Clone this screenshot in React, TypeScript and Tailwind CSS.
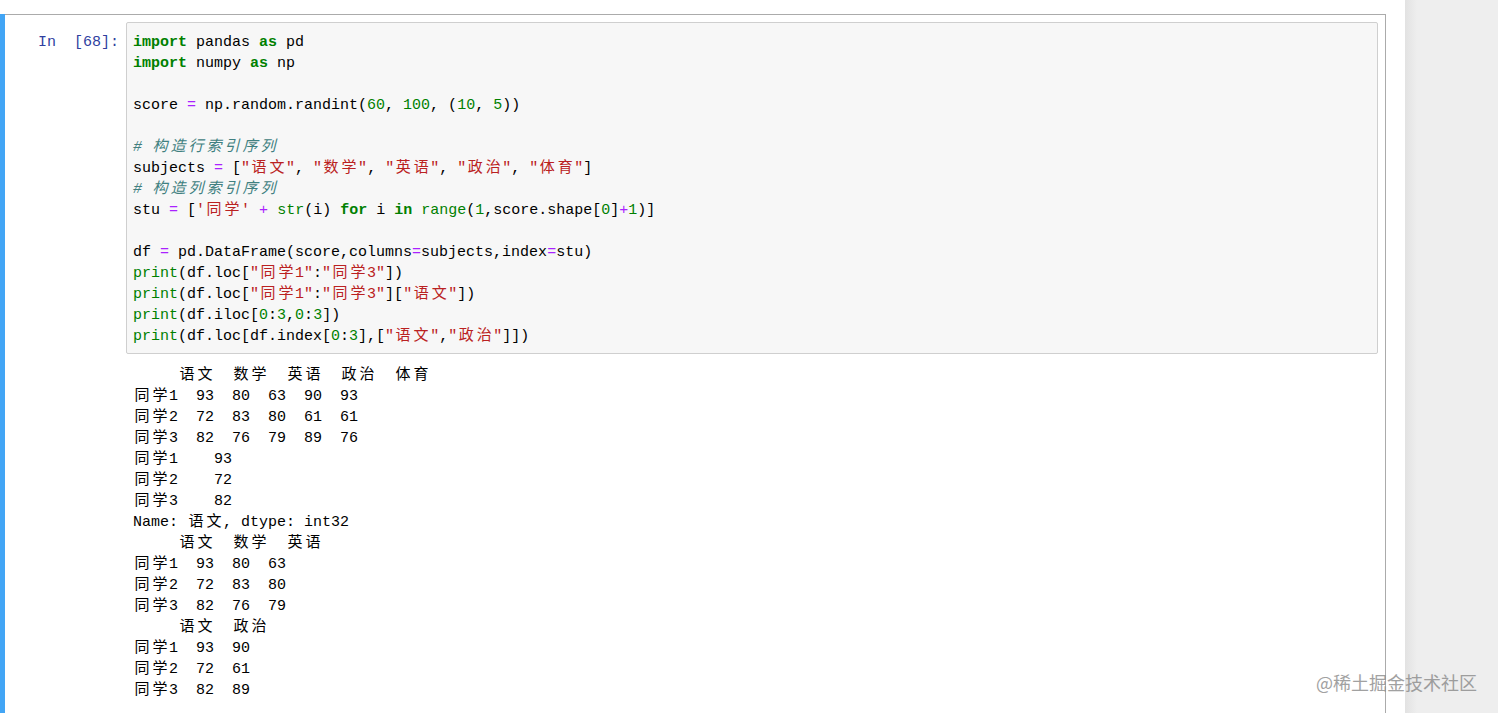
import React from "react";

const CJK = /[\u2E80-\u9FFF\uFF00-\uFFEF\u3000-\u303F]/;

// split text so every CJK char takes two mono cells, like the notebook font
function fmt(text: string) {
  const out: React.ReactNode[] = [];
  let buf = "";
  [...text].forEach((ch, i) => {
    if (CJK.test(ch)) {
      if (buf) out.push(buf);
      buf = "";
      out.push(
        <span key={i} className="inline-block w-[18px] text-center">
          {ch}
        </span>
      );
    } else {
      buf += ch;
    }
  });
  if (buf) out.push(buf);
  return out;
}

const K = ({ t }: { t: string }) => <span className="font-bold text-[#008000]">{t}</span>;
const B = ({ t }: { t: string }) => <span className="text-[#008000]">{t}</span>;
const N = ({ t }: { t: string }) => <span className="text-[#008000]">{t}</span>;
const O = ({ t }: { t: string }) => <span className="text-[#aa22ff]">{t}</span>;
const S = ({ t }: { t: string }) => <span className="text-[#ba2121]">{fmt(t)}</span>;
const C = ({ t }: { t: string }) => <span className="italic text-[#408080]">{fmt(t)}</span>;
const P = ({ t }: { t: string }) => <span>{fmt(t)}</span>;

const Line = ({ children }: { children?: React.ReactNode }) => (
  <div className="h-[21px] whitespace-pre">{children ?? " "}</div>
);

const output = [
  "     语文  数学  英语  政治  体育",
  "同学1  93  80  63  90  93",
  "同学2  72  83  80  61  61",
  "同学3  82  76  79  89  76",
  "同学1    93",
  "同学2    72",
  "同学3    82",
  "Name: 语文, dtype: int32",
  "     语文  数学  英语",
  "同学1  93  80  63",
  "同学2  72  83  80",
  "同学3  82  76  79",
  "     语文  政治",
  "同学1  93  90",
  "同学2  72  61",
  "同学3  82  89",
];

export default function App() {
  return (
    <div className="relative flex h-[713px] overflow-hidden bg-white font-['Liberation_Mono','Noto_Sans_CJK_SC',monospace] text-[15px] leading-[21px] text-black">
      <div className="flex-1 pt-[14px]">
        <div className="flex w-[1386px] h-full">
          <div className="w-[5px] bg-[#42a5f5]" />
          <div className="flex-1 border-t border-r border-[#ababab] pt-[7px] pr-[7px]">
            <div className="flex">
              <div className="w-[121px] pt-[10px] pr-[7px] text-right whitespace-pre text-[#303f9f]">
                In  [68]:
              </div>
              <div className="flex-1 rounded-[2px] border border-[#cfcfcf] bg-[#f7f7f7] pl-[6px] pt-[9px] pb-[6px]">
                <Line><K t="import" /> pandas <K t="as" /> pd</Line>
                <Line><K t="import" /> numpy <K t="as" /> np</Line>
                <Line />
                <Line>score <O t="=" /> np.random.randint(<N t="60" />, <N t="100" />, (<N t="10" />, <N t="5" />))</Line>
                <Line />
                <Line><C t="# 构造行索引序列" /></Line>
                <Line>subjects <O t="=" /> [<S t={'"语文"'} />, <S t={'"数学"'} />, <S t={'"英语"'} />, <S t={'"政治"'} />, <S t={'"体育"'} />]</Line>
                <Line><C t="# 构造列索引序列" /></Line>
                <Line>stu <O t="=" /> [<S t="'同学'" /> <O t="+" /> <B t="str" />(i) <K t="for" /> i <K t="in" /> <B t="range" />(<N t="1" />,score.shape[<N t="0" />]<O t="+" /><N t="1" />)]</Line>
                <Line />
                <Line>df <O t="=" /> pd.DataFrame(score,columns<O t="=" />subjects,index<O t="=" />stu)</Line>
                <Line><B t="print" />(df.loc[<S t={'"同学1"'} />:<S t={'"同学3"'} />])</Line>
                <Line><B t="print" />(df.loc[<S t={'"同学1"'} />:<S t={'"同学3"'} />][<S t={'"语文"'} />])</Line>
                <Line><B t="print" />(df.iloc[<N t="0" />:<N t="3" />,<N t="0" />:<N t="3" />])</Line>
                <Line><B t="print" />(df.loc[df.index[<N t="0" />:<N t="3" />],[<S t={'"语文"'} />,<S t={'"政治"'} />]])</Line>
              </div>
            </div>
            <div className="pl-[128px] pt-[11px]">
              {output.map((l, i) => (
                <Line key={i}><P t={l} /></Line>
              ))}
            </div>
          </div>
        </div>
      </div>
      <div className="w-[93px] bg-[linear-gradient(to_right,#e2e2e2,#eeeeee_12px)]" />
      <div className="absolute left-[1316px] top-[670px] font-['Noto_Sans_CJK_SC',sans-serif] text-[18px] leading-[24px] text-[#8a8a8a] opacity-80">
        @稀土掘金技术社区
      </div>
    </div>
  );
}
